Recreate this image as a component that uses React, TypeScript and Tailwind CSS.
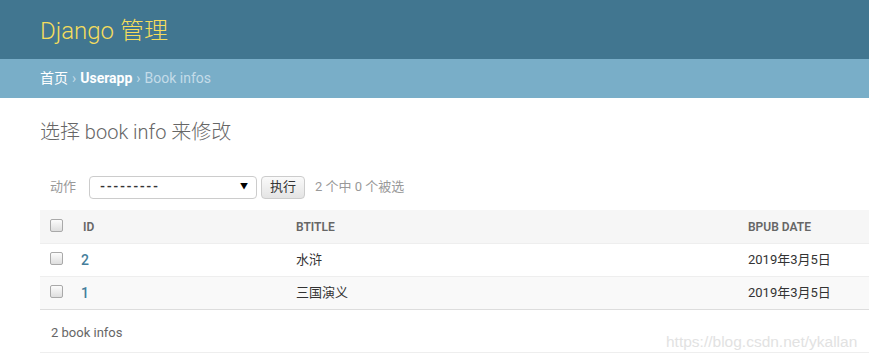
const rows = [
  { id: "2", title: "水浒", date: "2019年3月5日" },
  { id: "1", title: "三国演义", date: "2019年3月5日" },
];

const font = { fontFamily: 'Roboto, "Noto Sans CJK SC", sans-serif' };

const Box = () => (
  <span className="inline-block w-[13px] h-[13px] rounded-[2px] border border-[#a9a9a9] bg-gradient-to-b from-[#fcfcfc] to-[#dedede]" />
);

const App = () => {
  return (
    <div className="w-[869px] h-[358px] overflow-hidden bg-white relative" style={font}>
      <div className="h-[59px] bg-[#417690] px-[40px] flex items-center">
        <span className="text-[24px] font-light text-[#f5dd5d] leading-none mt-[2px]">Django 管理</span>
      </div>
      <div className="h-[39px] bg-[#79aec8] px-[40px] flex items-center text-[14px] text-white">
        <span>首页</span>
        <span className="mx-[4px] text-[#c4dce8]">›</span>
        <span className="font-bold">Userapp</span>
        <span className="mx-[4px] text-[#c4dce8]">›</span>
        <span className="text-[#c4dce8]">Book infos</span>
      </div>

      <div className="px-[40px] pt-[24px]">
        <h1 className="text-[20px] font-light text-[#666] leading-none">选择 book info 来修改</h1>

        <div className="flex items-center mt-[33px] pl-[10px] h-[24px] text-[13px]">
          <span className="text-[#999] mr-[13px]">动作</span>
          <div className="w-[168px] h-[23px] border border-[#ccc] rounded-[4px] flex items-center justify-between pl-[10px] pr-[8px] text-[#333]">
            <span className="tracking-[1.5px] font-bold">---------</span>
            <span className="text-[8px] text-black">▼</span>
          </div>
          <div className="ml-[4px] h-[23px] w-[44px] border border-[#ccc] rounded-[4px] bg-gradient-to-b from-[#fafafa] to-[#e4e4e4] flex items-center justify-center text-[#333]">
            执行
          </div>
          <span className="ml-[10px] text-[#999]">2 个中 0 个被选</span>
        </div>

        <div className="mt-[11px] w-[829px]">
          <div className="grid grid-cols-[43px_213px_452px_1fr] h-[33px] items-center bg-[#f6f6f6] text-[12px] font-semibold text-[#666] uppercase">
            <span className="pl-[10px] -mt-[3px] flex"><Box /></span>
            <span>ID</span>
            <span>BTITLE</span>
            <span>BPUB DATE</span>
          </div>
          {rows.map((r, i) => (
            <div
              key={r.id}
              className={`grid grid-cols-[43px_213px_452px_1fr] h-[33px] items-center text-[13px] text-[#333] border-t border-[#eee] ${i === 1 ? "bg-[#f9f9f9]" : "bg-white"}`}
            >
              <span className="pl-[10px] -mt-[3px] flex"><Box /></span>
              <span className="text-[#447e9b] font-medium text-[14px] -ml-[2px]">{r.id}</span>
              <span>{r.title}</span>
              <span>{r.date}</span>
            </div>
          ))}
          <div className="border-t border-[#ddd] h-[44px] flex items-center pl-[11px] pt-[4px] text-[13px] text-[#666] border-b border-b-[#eee]">
            2 book infos
          </div>
        </div>
      </div>

      <span className="absolute left-[666px] top-[330px] text-[15.5px] text-[#e2e2e2]" style={{ fontFamily: '"Liberation Sans", sans-serif' }}>
        https://blog.csdn.net/ykallan
      </span>
    </div>
  );
};

export default App;
